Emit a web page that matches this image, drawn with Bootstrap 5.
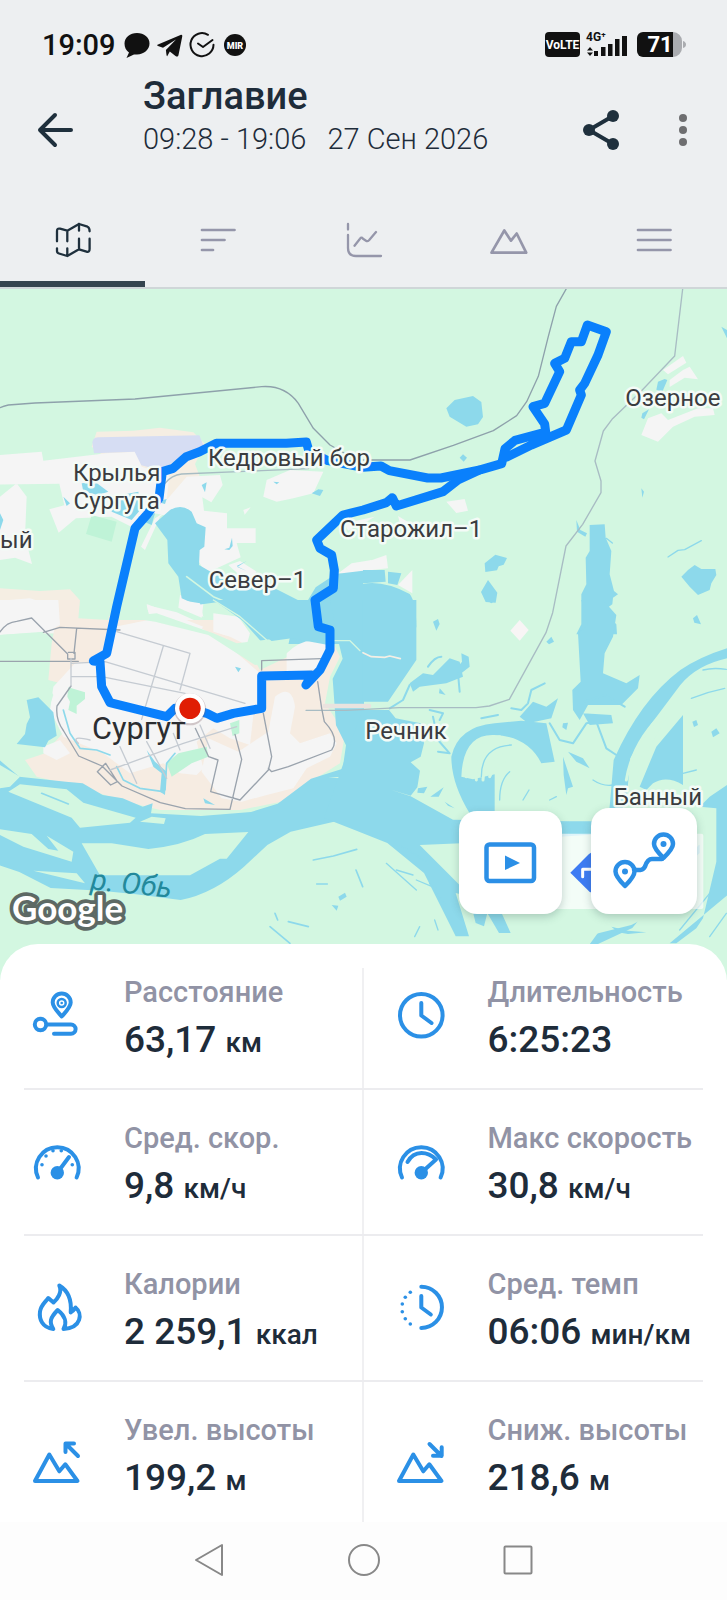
<!DOCTYPE html>
<html lang="ru">
<head>
<meta charset="utf-8">
<meta name="viewport" content="width=device-width, initial-scale=1">
<title>Заглавие</title>
<link href="https://cdn.jsdelivr.net/npm/bootstrap@5.3.0/dist/css/bootstrap.min.css" rel="stylesheet">
<style>
  body { font-family: Roboto, "Noto Sans", sans-serif; background: #fdfdfd; color: #1e2c3a; }
  button, .bar-row .btn { color: #1f303d; }
  svg { display: block; overflow: visible; }
  .ln { fill: none; stroke-linecap: round; stroke-linejoin: round; }
  .ln:not([stroke]) { stroke: currentColor; }
  .land .ln:not([stroke]), .track .ln:not([stroke]) { stroke: inherit; }
  .app-head { background: #edeff1; border-bottom: 2px solid #cfd6d8; }
  .status { padding: 25px 40px 11px 42px; height: 76px; color: #111; }
  .clock { font-size: 29px; line-height: 40px; font-weight: 500; }
  .bar-row { height: 108px; padding: 0 30px 0 35px; }
  .bar-row button { height: 108px; }
  .titles { margin-left: 68px; }
  .heading { font-size: 38px; line-height: 40px; font-weight: 500; }
  .period { font-size: 29px; line-height: 46px; font-weight: 300; white-space: pre; }
  .tab-btn { padding: 37px 0 20px; border-bottom: 6px solid transparent; color: #9596aa; }
  .tab-btn.active { border-color: #35444f; color: #1f303d; }
  .map-tools { right: 30px; bottom: 66px; gap: 29px; }
  .btn.tool { background: #fff; border-radius: 18px; box-shadow: 0 3px 8px rgba(40,70,70,.25); color: #2b8fe6; }
  .tool-a { width: 103px; height: 103px; }
  .tool-b { width: 106px; height: 106px; }
  .panel { margin-top: -36px; border-radius: 38px 38px 0 0; background: #fff; padding-top: 24px; }
  .panel .row + .row { border-top: 2px solid #ececef; }
  .stat { padding: 30px 0 18px 8px; border-right: 2px solid #f0f0f2; }
  .row:first-child > .stat { padding-top: 6px; }
  .row:last-child > .stat { padding-bottom: 14px; }
  .stat + .stat { padding-left: 32px; border-right: 0; }
  .stat svg { color: #2b90e6; margin-right: 36px; }
  .lbl { font-size: 29px; line-height: 36px; font-weight: 500; color: #9193a5; white-space: nowrap; }
  .val { font-size: 37px; line-height: 60px; font-weight: 500; white-space: nowrap; }
  .val span { font-size: 28px; line-height: 1; }
  .sys-btn { width: 154px; padding: 18px 0 19px; color: #888; }
  .place { font-size: 72px; fill: #3a3c40; stroke: #f4fbf7; stroke-width: 15px; stroke-linejoin: round; paint-order: stroke; }
</style>
</head>
<body>
<header class="app-head">
  <div class="status d-flex justify-content-between align-items-center">
    <div class="d-flex align-items-center">
      <span class="clock">19:09</span>
      <svg class="ms-2" width="126" height="30" viewBox="0 0 126 30">
        <path fill="#111" d="M13 3c7 0 12.500 4.600 12.500 10.500S20 24.500 13 24.500l-3 0-7.500 3.500 2.500-5.500C2 20.500.5 17.500.5 13.500.5 7.600 6 3 13 3z"/>
        <path fill="#111" d="M34 14.500 56.500 5c1.500-.6 2 .3 1.700 1.700L54.500 25c-.4 1.700-1.500 2-3 1L45.800 21.600l-2.600 4.600c-.8-.3-1-4.200-1.300-6.200L52 9.500 39 17.800l-5-1.700c-1-.4-1-1.200 0-1.600z"/>
        <g class="ln" stroke="#111" stroke-width="2"><path d="M84 4.800a11.500 11.500 0 1 0 5.500 10"/><path d="M74 13.500l5 3.500 9.500-7"/></g>
        <circle cx="111" cy="15" r="11" fill="#111"/>
        <text x="111" y="18.500" text-anchor="middle" font-size="9" font-weight="900" fill="#fff">MIR</text>
      </svg>
    </div>
    <svg width="142" height="30" viewBox="0 0 142 30">
      <rect y="2" width="35" height="25" rx="4" fill="#111"/>
      <text x="17.500" y="19" text-anchor="middle" font-size="12" font-weight="700" fill="#fff">VoLTE</text>
      <text x="41" y="11" font-size="12" font-weight="700" fill="#111">4G⁺</text>
      <path fill="#111" d="M42 20.500l3-3.500 3 3.500zM42 22.500l3 3.500 3-3.500zM49 21h4v5h-4zM56 17h4.500v9H56zM63 14h4.500v12H63zM70 9h4.500v17H70zM77 6h5v20h-5z"/>
      <path fill="#aaacb0" d="M120 2h8a9 9 0 0 1 9 9v7a9 9 0 0 1-9 9h-8zM138 11q3 1 3 3.500t-3 3.500z"/>
      <path fill="#111" d="M98 2h30v25H98a6 6 0 0 1-6-6V8a6 6 0 0 1 6-6z"/>
      <text x="115" y="22" text-anchor="middle" font-size="22" font-weight="700" fill="#fff">71</text>
    </svg>
  </div>
  <div class="bar-row d-flex align-items-start">
    <button class="btn p-0 border-0" type="button" aria-label="Назад"><svg width="40" height="40" viewBox="0 0 40 40"><path class="ln" stroke-width="4" d="M20 5 5 20l15 15M5 20h31"/></svg></button>
    <div class="titles flex-grow-1">
      <h1 class="heading mb-0">Заглавие</h1>
      <div class="period">09:28 - 19:06   27 Сен 2026</div>
    </div>
    <div class="d-flex gap-5">
      <button class="btn p-0 border-0" type="button" aria-label="Поделиться"><svg width="40" height="40" viewBox="0 0 40 40"><path class="ln" stroke-width="4" d="M32 6 8 20l24 14"/><g fill="currentColor"><circle cx="32" cy="6" r="6"/><circle cx="8" cy="20" r="6"/><circle cx="32" cy="34" r="6"/></g></svg></button>
      <button class="btn p-0 border-0" type="button" aria-label="Ещё"><svg width="28" height="40" viewBox="0 0 28 40"><g fill="#6e6e70"><circle cx="14" cy="8" r="4"/><circle cx="14" cy="20" r="4"/><circle cx="14" cy="32" r="4"/></g></svg></button>
    </div>
  </div>
  <nav class="d-flex" aria-label="Разделы">
    <button class="tab-btn active btn rounded-0 border-top-0 border-start-0 border-end-0 flex-fill" type="button" aria-label="Карта"><svg class="mx-auto" width="40" height="40" viewBox="0 0 40 40"><path class="ln" stroke-width="2.300" d="M4 20.300V10Q4 7 7 7.700L14.300 9.700 26 3l8.500 2.700Q36.600 6.500 36.600 10.300M14.300 9.700V20.300M26 3V9.700M4 27.300V30Q4 32 6 32.500L14.300 35 26 28.300l7.500 2.300Q36.600 31.500 36.600 28V17.700M14.300 27.300V35M26 17.700V28.300"/></svg></button>
    <button class="tab-btn btn rounded-0 border-top-0 border-start-0 border-end-0 flex-fill" type="button" aria-label="Отрезки"><svg class="mx-auto" width="40" height="40" viewBox="0 0 40 40"><path class="ln" stroke-width="2.700" d="M4 9h32.500M4 19h22.500M4 29h11"/></svg></button>
    <button class="tab-btn btn rounded-0 border-top-0 border-start-0 border-end-0 flex-fill" type="button" aria-label="Графики"><svg class="mx-auto" width="40" height="40" viewBox="0 0 40 40"><path class="ln" stroke-width="2.300" d="M4 3v5.500M4 14v13q0 8 8 8h25M10.500 24.700l5.500-7q1.500-2 3 0l3 2q1.500 1 3-.5l7-8.200"/></svg></button>
    <button class="tab-btn btn rounded-0 border-top-0 border-start-0 border-end-0 flex-fill" type="button" aria-label="Высота"><svg class="mx-auto" width="40" height="40" viewBox="0 0 40 40"><path class="ln" stroke-width="2.700" d="M2.500 31.700 15.300 9.500 22 19.700l5.700-7.200 9.500 19.200z"/></svg></button>
    <button class="tab-btn btn rounded-0 border-top-0 border-start-0 border-end-0 flex-fill" type="button" aria-label="Список"><svg class="mx-auto" width="40" height="40" viewBox="0 0 40 40"><path class="ln" stroke-width="2.700" d="M4 9h32.500M4 19h32.500M4 29h32.500"/></svg></button>
  </nav>
</header>

<main>
  <section class="position-relative overflow-hidden" aria-label="Карта маршрута">
    <svg class="w-100" viewBox="0 867 2181 2073" role="img">
      <rect y="867" width="2181" height="2073" fill="#d3f7e1"/>
      <!-- north-west: land use and lakes -->
      <g transform="translate(0 840)">
        <path fill="#f5eee3" d="M275 500l15-45 110-3 80-9 100 14 35 35-30 60 15 40-40 60-60 20zM0 925l120 8 90-5 32 35-10 97H0z"/>
        <path fill="#f5f5f5" d="M0 525l125-10 5 27 190-22 90-5 15 45 60 20 25-10-10 90 60-70 100-5 8 30-34 52-27-15 5 40 69 8v45h86v44h-57l12 43-83 38-15 25-30-55-30-120-100-20-70 40-60-30-106 5-52 43-28-70 45-12-15-65-215 3zM0 650l50-40 30 40-5 120 21 82-51-19-45 7zM790 650l10-50 70-30 100 5-30 65-60 15-50 10zM1015 880l40-30 60-10v50zM440 975l90 22 90 40-20 20-150-40zM540 945l70 28-5 40-70-30zM465 715l40-25-25 20-45 100-12-10zM730 690l22-8-18 22zM0 962l90-7 90 30v75H0zM685 855l35-12 50 32-30 30z"/>
        <path fill="#d6ddf3" d="M278 495q-4-25 20-23l300-6 14 35-70 30-60 40-58-15-20-41-122 5z"/>
        <path fill="#bff3d7" d="M275 705l75 20-15 60-77-23z"/>
        <path fill="#8dd9eb" d="M465 730l45-40q35-20 65 5l15 35 27 12-4 58-14 10-2 45q60 40 130 45l100 26 90 46 30-50 60-40 82-10v220H790l-80-90-60-35-60 8-45-20-10-65-30-40-3-70zM245 610l40-5 40 30-30 10-45-10zM335 650l80-15 10 50-30 35-60-25zM415 710l50-10-10 35-35-15zM190 650l20 20-10 8zM0 700l10 20-10 30zM605 615l15-8-5 30zM935 640l20-12 15 2-10 18zM820 605l18 2-8 6zM673 808l15-5 8-30 2 25-10 12zM710 858l30-15-28 18 28 12zM470 665l30-8-5 15z"/>
        <path class="ln" stroke="#d3f7e1" stroke-width="5" d="M560 890l80 60 60 25 80 55 80 30"/>
      </g>
      <!-- north-east -->
      <g transform="translate(1089 840)">
        <path fill="#f5f5f5" d="M900 270l60-42 10 20-55 35zM920 300l40-30 20-10 25 38-40-5-45 28zM835 465l20-50 40-15 20 20 90-35h45l5 20-60 5-65 30-45 45zM250 665l55-8 10 35-35 7zM0 850l70-25 5 40-75 8zM105 915l43-45v70zM-55 730l90-20-20 12-60 30zM105 708l50 30-40 5z"/>
        <path fill="#8dd9eb" d="M250 385l25-25 55-12 25 18 5 45-15 22-35 7-50-30zM290 533l10-10 12 10-10 12zM885 305l20-8 8 3-15 35-18-6zM838 400l20-12-15 30-8-5zM1075 140l17 10v25zM835 625l8 10-5 18zM365 850l32-26 35 10-10 20-15 5-5 12-35 5zM375 900l28 38-5 30-30-2-14-30zM955 890l20-20 20-15 20 12h42l3 18-15 25-5 20-35 15-25-25zM640 720l12 30 20 10-5 10-25-15zM680 735l45-2 3 40 17 40-5 70 13 50 12 10-15 10-2 20-28 20 40 40 2 30H640l15-30v-90l15-30-2-80 12-20zM0 870h65l3 35-68 5zM75 875l40 5-12 35-28-5zM0 912q60-12 140 30 20 25 20 100H0z"/>
        <path class="ln" stroke="#8dd9eb" stroke-width="4" d="M1015 782l-50 27-20 2-30 20M730 775l18 14"/>
      </g>
      <!-- south-west: town and river -->
      <g transform="translate(0 1800)">
        <path fill="#f6ece2" d="M180 0h60l110 60h350l80 150 210-100 30 60-30 60-15 80 60 90-15 90-80 50-70 60-150 30H480l-120-30-120-40-130-30-35-50 60-20 70-80-10-60 25-60-75-20 10-110z"/>
        <path fill="#f5f5f5" d="M0 0h175l5 75-40 20-140 10zM225 190l90-10 30-100 100-20 160 25 95 65 75 65 5 100-20 30-10 90-60-20-50-30-50 40 20 80-20 20-50-5-50-30-100 30-80-60-120-50-40-80 10-70zM860 160q60-60 120-25l-10 65-110 25zM825 290q50-40 60 30l-15 80 30 30 90-30 20 30-20 40-70 35-40 60-80 20-75 20-60-10-60-80 20-100 90 40 90-60z"/>
        <path fill="#f5f5f5" d="M440 12l170 68-15 15-150-60zM640 40l75 10 35 50-10 35-50-25-50-15zM540 0l60 10 10 40-60-20zM130 440l50-20 30 40-40 20-40-20z"/>
        <path fill="#d3f7e1" d="M0 105l130-10 10 90-5 60 25 40-40 120-45 30-10 70-65-10zM370 50l100-10 170 60 70 30 160-20-10 50-50 30-45 5-140-90-160-40zM240 0h95l-10 60-90-5z"/>
        <path fill="#bff3d7" d="M205 262l50 15v20l-25 20v25l-25-12 5-25-8-15zM535 460l85-20 5 30-50 20-60 40-15-40zM690 370l28-10v40l-20 8z"/>
        <path fill="#8dd9eb" d="M640 0h300l20 85 30 15-5 35-110-20-60 8zM990 0h102v665l-90 0-130 30-70 40-70 65q-90 80-190 100l-140-18-100-10-150-8-94-48-60-20V480l60 50 140 15 50 5 60 35 60 10 60 25 30-10-5 30 150 8 150-12 80-25 100-75 95-30 10-70-30-60-10-140 30-60-10-40z"/>
        <path fill="#8dd9eb" d="M80 300l35-8 45 45 10 70-25 15-10 20-85-10 25-30 5-30 10-20zM285 595l30 5-10 30-25-10zM360 640l30-3-20 15zM610 595l35 20-30-5zM705 200l18 5-8 12zM440 450l20 50 25 20-5 55 15 10 5-70-35-30z"/>
        <path fill="#d3f7e1" d="M25 575l35-22 140 15 50 40 157 45-17 15-150 15-25-30zM245 730l90 0 110 17q100-10 170-45l130-6-65 80-20 0-90 50H300zM0 705l70 35 145 45 5-30-80-48 35 45-30-5-50-45-100-15zM100 812l130 8 25 30zM420 665l35-15 42 5-5 17zM0 495l60 35-30 30-30 5z"/>
        <path class="ln" stroke="#8dd9eb" stroke-width="5" d="M190 330l20 70 30 45 50 5 40 15M350 500l20 40 50 25 70 10M525 460l-25 30-5 80M940 780l60-12 70-20M125 580l80 32M810 980l60 50M865 965l60 15M825 940l8 20M1068 810l20 50M950 852h32"/>
        <path class="ln" stroke="#d3f7e1" stroke-width="4" d="M640 0l80 50 80 70M1000 122h50l30 30"/>
        <path fill="#8dd9eb" d="M1015 890l20-12 5 12-20 12zM995 915l20 2-5 15zM870 1003l25 3z"/>
        <path fill="#d3f7e1" d="M985 533l107-8v12z"/>
      </g>
      <!-- south-east: delta -->
      <g transform="translate(1089 1800)">
        <path fill="#8dd9eb" d="M-2 0h162v180L75 305H-2zM-2 330h80l20 25 75 15 10 60-10 40-30 17 28 25-8 50-20 25-60-18 60 20 127 70 350 5h70l90-15 230-10v120l-72 65-130 160-140 65 120-165 120-120-520-55-45 70 100 220h-35l-35-60-10 40-25-10-20-80-40-10 40 130h-40l-60-120-35-70-110-90-100-40-90-35z"/>
        <path fill="#d3f7e1" d="M170 735l125-5v130zM590 710l465-30-130 150-60 115-60 30-180 45-160-190zM1000 625l92 20v80l-85 10-70-25z"/>
        <path fill="#8dd9eb" d="M320 640q-55-90-55-170 20-90 130-100l80-8 75 8 25 115-40 5q-40-80-140-85-95-5-100 125l35 8 65-15v117zM655 0h65l40 45-10 65-25 50-5 60 70 30 40-25-5 40-50 50h-100l-25 45-20-30-2-60 25-25-8-145 30-25zM1092 145v30q-90 20-140 80l-90 120-60 100-10 110-20 60-35 10 15-175q80-180 200-270 60-40 140-65zM830 560l50-120 80-95v210q-50-30-90-5l-20 20zM920 1030l180-150v-330l-60 40-30 30 50 5v160l-40 170-20 30-60 45zM745 980l50 12 55 5-55 5-30-5zM140 250l40-30 30 5 50-50 30 10 10 45-50 20-80 10-20 15zM295 160l22 10 3 30-25 20-10-20 12-15zM210 65l15-8 5 15-10 20zM990 55l12-10 12 28-20-5zM550 125l15-15 8 15-15 8zM370 0h30l-15 10zM470 350l40-45 40 15 35-25-20 60-70 15zM660 340l85 5 5 25-70 5zM600 370l15-2-5 22-12-8zM615 455l45 20 20 30-40-20zM600 470l30 90-15 5-5 20-8-60zM230 265l18 20-20-5zM988 365l12-5 5 15-12 6zM1045 395l15-10 10 15-20 12zM245 605l30 20-20-8zM165 565l28-5-10 20-20-2zM202 590l40-28-15 28z"/>
        <path class="ln" stroke="#8dd9eb" stroke-width="6" d="M140 255l-20 45-40 25M545 250l-40 20-10 40-20 20-30-5M560 370l30 50 40 10 40-60 30-5 30 80 30 20M195 200q20-30 40-30M285 220l5 55M355 355l50-10M665 305l60-20 60 35M200 330l40 10-10 20M210 350l15 70 35 40-35-5"/>
        <path class="ln" stroke="#d3f7e1" stroke-width="9" d="M310 530q0-110 100-120M340 540q-5-80 60-100M360 540q0-50 55-75M380 530q10-25 45-40M790 540q20-120 120-210M815 555q0-60 100-215"/>
        <path class="ln" stroke="#8dd9eb" stroke-width="4" d="M355 530q0-90 90-95M410 600q0-60 30-85M480 600l18-30M560 600l20-10M690 540q30 20 60 15M985 295q50-20 100-30M1020 210q30-8 70-2M110 735l80 50M100 810l50 15M160 840l60 25M200 850l45 60M215 960l10 30M170 980l-15 30M950 990l90-110M1040 1010l50-70M960 520l40-10M70 790l90 80"/>
        <path fill="#f8f5f5" d="M442 92l28-32 27 30-27 32z"/>
        <path class="ln" stroke="#f4efe5" stroke-width="5" d="M0 158l25 12 40 2 15-4 32 8"/>
        <path class="ln" stroke="#e9e3df" stroke-width="14" d="M-115 318H18"/>
      </g>
      <!-- roads -->
      <g class="ln" stroke="#8ea1ab" stroke-width="4">
        <g class="track">
          <path class="ln" d="M0 1223q10-5 25-8l80-6 300-12 380-37q70-5 110 50l45 75 50 50 80 45 160 0 130-44 120-44 70-45 30-42 35-76 30-120 24-90 34-60"/>
        </g>
        <path stroke="#a8bcc3" d="M2048 867l-24 201-100 105-88 85-26 35-25 90 18 60v35l-55 95-50 65-40 200-20 60-110 200-60 20-40 5h-230l-160 8h-120M495 1450q20-25 50-28l240-10 140-6"/>
      </g>
      <g class="ln" stroke="#9aa3ad" stroke-width="4" transform="translate(0 1800)">
        <path d="M0 184h235M0 96q20-30 50-32l45-10 108 108v15h22v-20h-20M130 97l50-15 180 8M230 85l-8 75M213 258l-42 60q-5 40 20 75l45 75 70 30 60 60 115 50 75 18 134 2 35-150-20-75M785 210v-28l180-6M790 340l25 130-10 40-85 90-88-25 22-95-28-10-40-85M805 505l10 10 50-15 130-50q25-35-22-85l-8-40-12-80M292 515l25-25 35 55-20 10z"/>
        <path stroke="#c5cbd2" d="M213 175v83M350 95l220 65-30 110M490 138l-65 220M215 190l100-5 420 125M215 230h90l250 50M270 420q-60-15-35 10M360 440l50 110M330 510l220-80 160-50M520 400l20 50M600 375l30 70M440 425l60 110"/>
      </g>
      <!-- recorded track -->
      <g class="ln" stroke="#0a80fc" stroke-width="27">
        <path d="M570 2125l-45 0-25 25-170-42-25-48-5-75-20-2 40-23 30-140 55-235 35-40 37-50 10-80 32-10 40-35 40-15 50-25h210l60-4 8 28 57 28 104 20 55-4 25 14 115 22h40l120-25 62-18 10-45 30-25 92-25-3-24-35-52 35-10 45-95-15-25 30-15 20-50h30l18-50 57 20-25 70-40 85-15 20 5 15-45 105-105 45-75 37"/>
        <path d="M1439 1410l-65 30-45 35-140 43-12-25-18 15-70 22-60 15-79 75 10 25 35 20 8 45-3 55-55 35 10 80 35 10v60l-30 60-42 45 17-30-150 3v97l-85 15-50 15-30-15-50-15"/>
      </g>
      <circle cx="570" cy="2128" r="48" fill="#7b5a60" opacity=".3"/>
      <circle cx="570" cy="2125" r="45" fill="#fff"/>
      <circle cx="570" cy="2125" r="32" fill="#e01d04"/>
      <!-- place names -->
      <g class="place">
        <text x="624" y="1397">Кедровый бор</text>
        <text x="350" y="1444" text-anchor="middle">Крылья</text>
        <text x="350" y="1526" text-anchor="middle">Сургута</text>
        <text x="0" y="1644">ый</text>
        <text x="1020" y="1610">Старожил–1</text>
        <text x="626" y="1764">Север–1</text>
        <text x="1876" y="1218">Озерное</text>
        <text x="1096" y="2218">Речник</text>
        <text x="1841" y="2414">Банный</text>
      </g>
      <text x="276" y="2216" font-size="92" fill="#2b2d31">Сургут</text>
      <text x="270" y="2668" font-size="88" font-style="italic" fill="#23899b" transform="rotate(6 270 2668)">р. Обь</text>
      <text x="36" y="2764" font-family="Lato, sans-serif" font-weight="700" font-size="105" fill="#fff" stroke="#5d6964" stroke-width="22" stroke-linejoin="round" paint-order="stroke">Google</text>
      <!-- directions strip behind the buttons -->
      <rect x="1660" y="2501" width="450" height="226" rx="6" fill="#fff" opacity=".72"/>
      <path fill="#3e7cf3" d="M1711 2618l56-56q12-10 24 0l56 56-56 56q-12 10-24 0z"/>
      <path class="ln" stroke="#fff" stroke-width="9" d="M1748 2630v-22h50"/>
    </svg>
    <div class="map-tools position-absolute d-flex align-items-end">
      <button class="tool tool-a btn p-0 border-0" type="button" aria-label="Воспроизвести"><svg width="103" height="103" viewBox="0 0 103 103"><rect class="ln" stroke-width="4.500" x="27.500" y="33.500" width="47.500" height="36.500" rx="3"/><path fill="currentColor" d="M46 44.500v14.500L61 52z"/></svg></button>
      <button class="tool tool-b btn p-0 border-0" type="button" aria-label="Маршрут"><svg width="106" height="106" viewBox="0 0 106 106"><g stroke="currentColor" class="ln" stroke-width="4.500"><path d="M34 78C29 73 24.500 68 24.500 63.500a9.500 9.500 0 0 1 19 0C43.500 68 39 73 34 78zM72.500 50C67.500 45 63 40 63 36a9.500 9.500 0 0 1 19 0C82 40 77.500 45 72.500 50z"/><path d="M43 61.500c6 1 9 1 11-3 2-6 4-7.500 7-7.500h10"/></g><g fill="currentColor"><circle cx="34" cy="63.500" r="3"/><circle cx="72.500" cy="36" r="3"/></g></svg></button>
    </div>
  </section>

  <section class="panel position-relative px-4">
    <div class="row g-0">
      <div class="stat col-6 d-flex">
        <svg width="56" height="96" viewBox="0 0 56 96" class="flex-shrink-0"><g class="ln" stroke-width="4"><path d="M29.700 42.500C25 37 20.700 33 20.700 28.500a9 9 0 0 1 18 0C38.700 33 34.500 37 29.700 42.500z"/><circle cx="8.500" cy="50.500" r="5.700"/><path d="M15 50.500h24a4.600 4.600 0 0 1 0 9.200H22"/></g><circle class="ln" cx="29.700" cy="29" r="4" stroke-width="2.500"/><circle cx="29.700" cy="29" r="1.300" fill="currentColor"/></svg>
        <div><div class="lbl">Расстояние</div><div class="val">63,17 <span>км</span></div></div>
      </div>
      <div class="stat col-6 d-flex">
        <svg width="56" height="96" viewBox="0 0 56 96" class="flex-shrink-0"><g class="ln" stroke-width="4"><circle cx="25.300" cy="41.300" r="21.300"/><path d="M25.300 29v12.500l10.200 7.500"/></g></svg>
        <div><div class="lbl">Длительность</div><div class="val">6:25:23</div></div>
      </div>
    </div>
    <div class="row g-0">
      <div class="stat col-6 d-flex">
        <svg width="56" height="96" viewBox="0 0 56 96" class="flex-shrink-0"><path class="ln" stroke-width="4" d="M6 57.500a21.300 21.300 0 1 1 38.600 0M25.300 52.700 37 37"/><g fill="currentColor"><circle cx="25.300" cy="52.700" r="6.700"/><circle cx="10" cy="44.700" r="1.800"/><circle cx="14" cy="36" r="1.800"/><circle cx="21" cy="30.700" r="1.800"/><circle cx="29.300" cy="30.700" r="1.800"/><circle cx="40.300" cy="44.700" r="1.800"/></g></svg>
        <div><div class="lbl">Сред. скор.</div><div class="val">9,8 <span>км/ч</span></div></div>
      </div>
      <div class="stat col-6 d-flex">
        <svg width="56" height="96" viewBox="0 0 56 96" class="flex-shrink-0"><path class="ln" stroke-width="4" d="M6 57.500a21.300 21.300 0 1 1 38.600 0M11.500 42q5-9 14-9 8 0 14.500 6.500L25.300 52.700"/><circle cx="25.300" cy="52.700" r="6.700" fill="currentColor"/></svg>
        <div><div class="lbl">Макс скорость</div><div class="val">30,8 <span>км/ч</span></div></div>
      </div>
    </div>
    <div class="row g-0">
      <div class="stat col-6 d-flex">
        <svg width="56" height="96" viewBox="0 0 56 96" class="flex-shrink-0"><path class="ln" stroke-width="4" d="M21.300 63C10 61.500 7 53 8 45.500 9 39 13 36.500 16.300 32L21.500 36.500C25.500 33 30.500 26 27.300 19.500 35 24 40 32 38.700 46.500 41 45.500 42.500 43 43.500 41.500 50.500 47 50 62 31.500 63 35 57 33.500 50 25.700 44 18 52 17 56 21.300 63z"/></svg>
        <div><div class="lbl">Калории</div><div class="val">2 259,1 <span>ккал</span></div></div>
      </div>
      <div class="stat col-6 d-flex">
        <svg width="56" height="96" viewBox="0 0 56 96" class="flex-shrink-0"><path class="ln" stroke-width="4" d="M25.300 20.700a20.600 20.600 0 0 1 0 41.300M25.300 30v11.500l9.500 7"/><g fill="currentColor"><circle cx="14.300" cy="26.300" r="1.800"/><circle cx="9.300" cy="31.300" r="1.800"/><circle cx="6.300" cy="38" r="1.800"/><circle cx="6.300" cy="45.700" r="1.800"/><circle cx="9.300" cy="52.700" r="1.800"/><circle cx="14.300" cy="58" r="1.800"/></g></svg>
        <div><div class="lbl">Сред. темп</div><div class="val">06:06 <span>мин/км</span></div></div>
      </div>
    </div>
    <div class="row g-0">
      <div class="stat col-6 d-flex">
        <svg width="56" height="96" viewBox="0 0 56 96" class="flex-shrink-0"><path class="ln" stroke-width="4" d="M3 69 17.300 42.500l10 16.800 6-7L45.500 69zM42 31.500H33.500V40M34 32l12 12"/></svg>
        <div><div class="lbl">Увел. высоты</div><div class="val">199,2 <span>м</span></div></div>
      </div>
      <div class="stat col-6 d-flex">
        <svg width="56" height="96" viewBox="0 0 56 96" class="flex-shrink-0"><path class="ln" stroke-width="4" d="M3 69 17.300 42.500l10 16.800 6-7L45.500 69zM33.500 32l12 12M37 43.700h8.700v-8.500"/></svg>
        <div><div class="lbl">Сниж. высоты</div><div class="val">218,6 <span>м</span></div></div>
      </div>
    </div>
  </section>
</main>

<footer class="d-flex justify-content-center">
  <button class="sys-btn btn border-0" type="button" aria-label="Назад"><svg class="mx-auto" width="40" height="40" viewBox="0 0 40 40"><path class="ln" stroke-width="2" d="M6 20 32 5v30z"/></svg></button>
  <button class="sys-btn btn border-0" type="button" aria-label="Домой"><svg class="mx-auto" width="40" height="40" viewBox="0 0 40 40"><circle class="ln" stroke-width="2" cx="20" cy="20" r="15"/></svg></button>
  <button class="sys-btn btn border-0" type="button" aria-label="Недавние"><svg class="mx-auto" width="40" height="40" viewBox="0 0 40 40"><rect class="ln" stroke-width="2" x="6.500" y="6.500" width="27" height="27" rx="1"/></svg></button>
</footer>
<script src="https://cdn.jsdelivr.net/npm/bootstrap@5.3.0/dist/js/bootstrap.bundle.min.js"></script>
</body>
</html>
